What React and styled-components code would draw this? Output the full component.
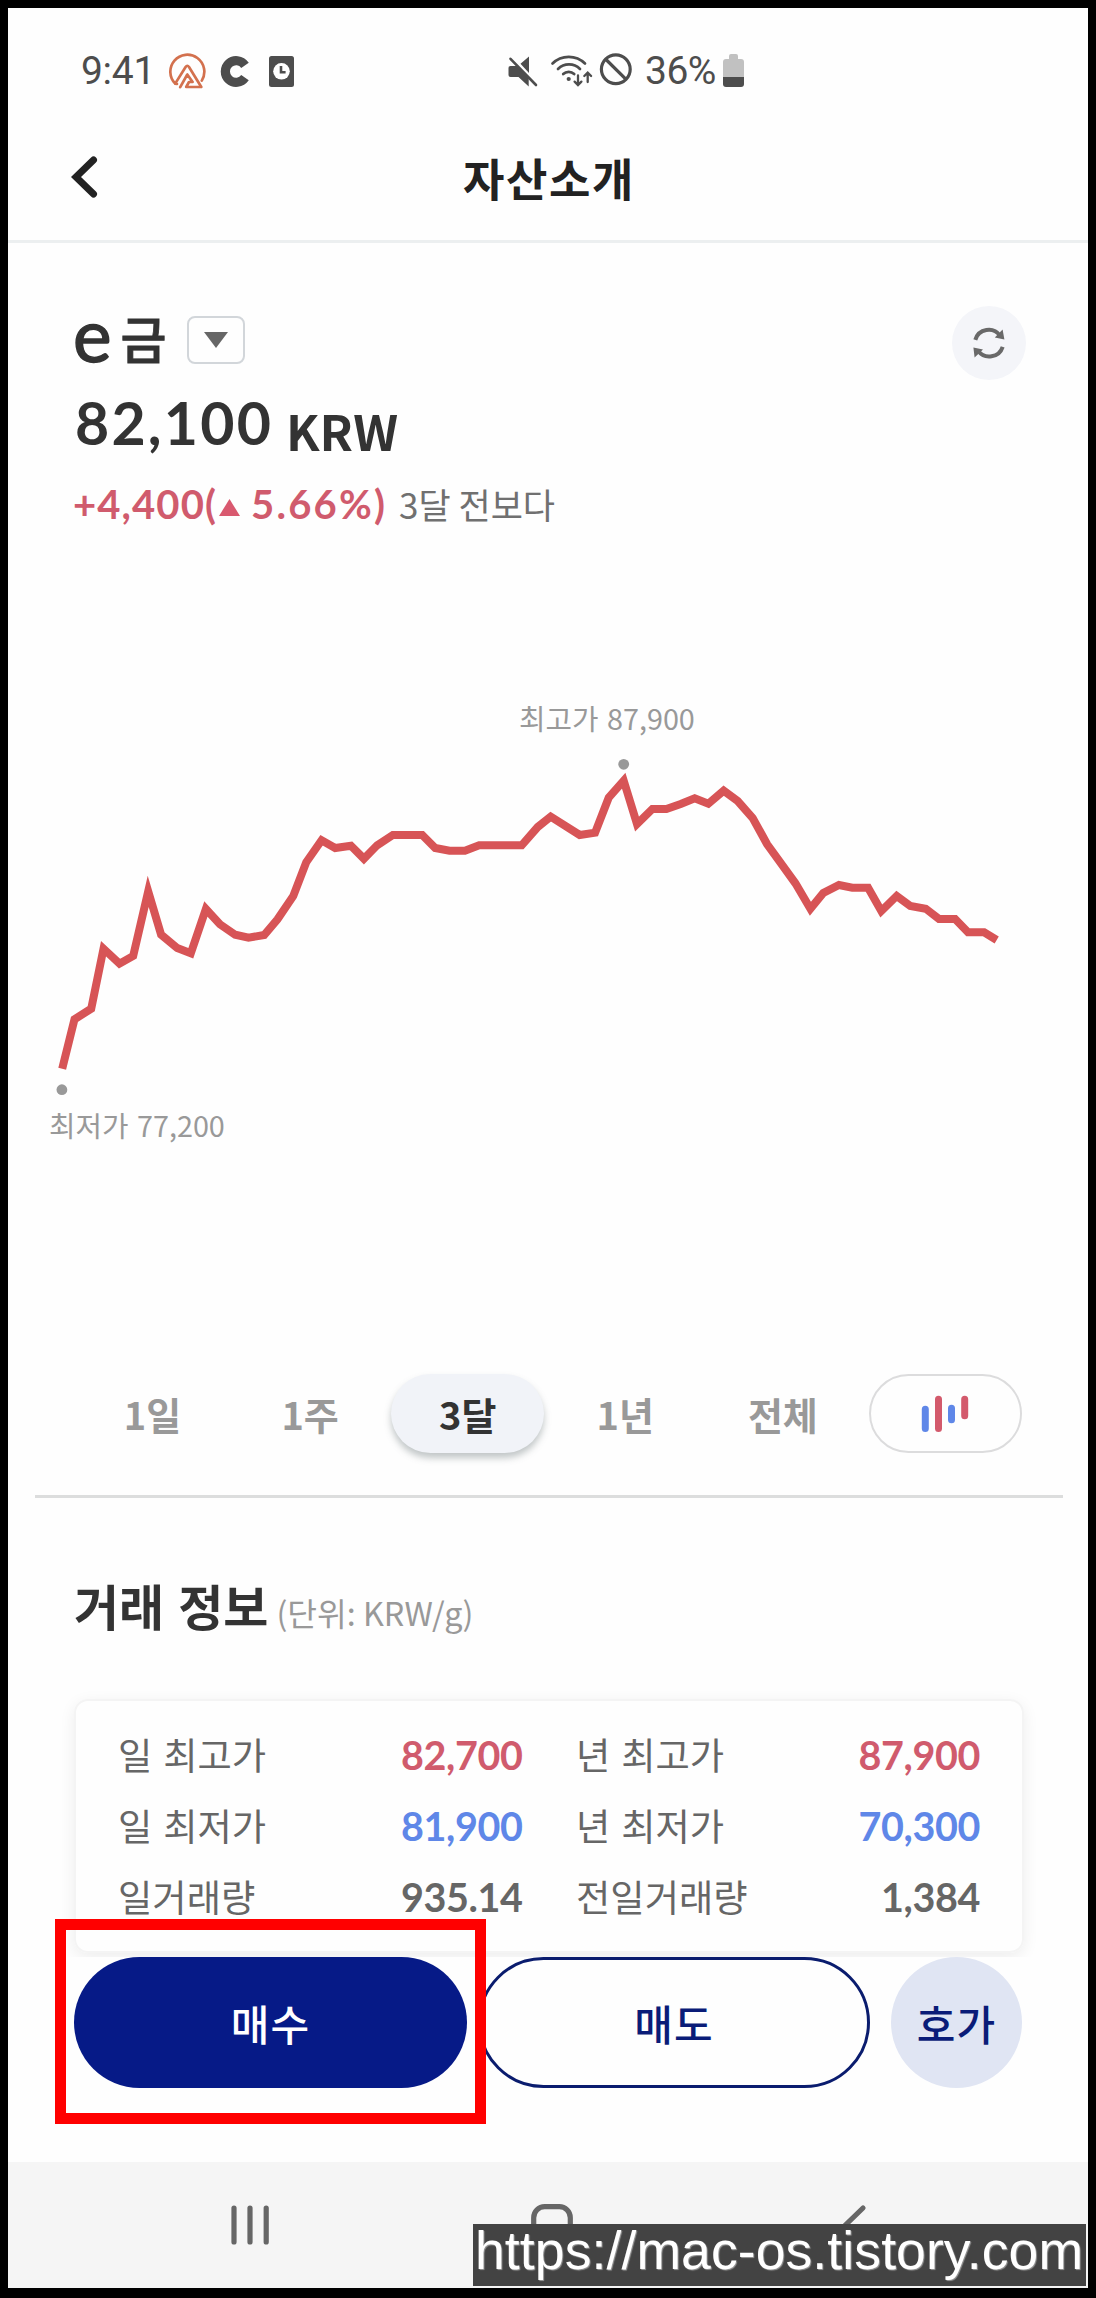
import React from "react";
import styled, { createGlobalStyle, css } from "styled-components";

const kr = `"Noto Sans CJK KR", "Noto Sans", sans-serif`;
const lato = `Lato, "Noto Sans CJK KR", sans-serif`;

const color = {
  ink: "#333333",
  gray: "#666666",
  mute: "#999999",
  up: "#d05b6d",
  down: "#5f87e8",
  navy: "#061a87",
  status: "#4d4d4d",
};

const Global = createGlobalStyle`
  * { box-sizing: border-box; }
  html, body { margin: 0; padding: 0; background: #000; }
  button { font: inherit; color: inherit; background: none; border: 0; padding: 0; margin: 0; }
  svg { display: block; flex: none; }
`;

const Frame = styled.div`
  width: 1096px;
  height: 2298px;
  padding: 8px 8px 10px;
  background: #000;
  font-family: ${kr};
  color: ${color.ink};
`;

const Screen = styled.div`
  position: relative;
  height: 100%;
  background: #fefefe;
  display: flex;
  flex-direction: column;
  white-space: nowrap;
`;

const StatusBar = styled.div`
  height: 105px;
  padding: 21px 0 0 73px;
  display: flex;
  align-items: center;
  font-family: Roboto, sans-serif;
  font-size: 39px;
  color: ${color.status};
`;

const Clock = styled.span`
  width: 87px;
  letter-spacing: -0.3px;
`;

const Notices = styled.div`
  width: 339px;
  display: flex;
  align-items: center;
`;

const Percent = styled.span`
  width: 91px;
  padding-left: 13px;
  letter-spacing: -0.5px;
`;

const Indicators = styled.div`
  display: flex;
  align-items: center;
`;

const Header = styled.header`
  height: 130px;
  border-bottom: 3px solid #eceff0;
  padding: 0 63px;
  display: grid;
  grid-template-columns: 60px 1fr 60px;
  align-items: center;
`;

const Title = styled.h1`
  margin: 0;
  padding: 2px 0 0 2px;
  text-align: center;
  font-size: 45px;
  line-height: 60px;
  font-weight: 700;
  letter-spacing: 1.6px;
  color: #222;
`;

const Content = styled.main`
  height: 1714px;
  overflow: hidden;
  display: flex;
  flex-direction: column;
`;

const Summary = styled.section`
  height: 285px;
  padding: 73px 62px 0 65px;
`;

const NameRow = styled.div`
  height: 48px;
  display: flex;
  align-items: flex-start;
`;

const AssetName = styled.div`
  margin-top: -6px;
  width: 114px;
  display: flex;
  align-items: flex-start;
  line-height: 48px;
`;

const LatinInitial = styled.span`
  font-family: ${lato};
  font-size: 73px;
  -webkit-text-stroke: 1.4px ${color.ink};
`;

const Hangul = styled.span`
  margin: 3px 0 0 9px;
  font-size: 50px;
  font-weight: 500;
  -webkit-text-stroke: 0.8px ${color.ink};
`;

const Picker = styled.button`
  width: 58px;
  height: 48px;
  border: 2.5px solid #d2d6da;
  border-radius: 8px;
  display: flex;
  align-items: center;
  justify-content: center;
`;

const Refresh = styled.button`
  margin: -10px 0 0 auto;
  width: 74px;
  height: 74px;
  border-radius: 50%;
  background: #f4f5f9;
  display: flex;
  align-items: center;
  justify-content: center;
`;

const PriceRow = styled.div`
  margin-top: 28px;
  height: 60px;
  line-height: 60px;
  display: flex;
  padding-left: 2px;
`;

const Price = styled.span`
  width: 211px;
  padding-top: 1px;
  font-family: ${lato};
  font-weight: 700;
  font-size: 59px;
  letter-spacing: 2.2px;
`;

const Currency = styled.span`
  margin-top: 8px;
  font-size: 49px;
  font-weight: 700;
`;

const ChangeRow = styled.div`
  margin-top: 26px;
  height: 50px;
  line-height: 50px;
  display: flex;
  align-items: flex-start;
`;

const Change = styled.span`
  width: 326px;
  padding-top: 1px;
  display: flex;
  align-items: center;
  font-family: ${lato};
  font-weight: 700;
  font-size: 40px;
  letter-spacing: 1.1px;
  color: ${color.up};
`;

const Rate = styled.span`
  letter-spacing: 2.2px;
`;

const UpMark = styled.svg`
  margin: 7px 11px 0 2px;
`;

const Since = styled.span`
  padding-top: 1px;
  font-size: 35px;
  color: #707070;
`;

const ChartSvg = styled.svg`
  width: 1080px;
  height: 846px;
`;

const ChartLabel = styled.text`
  font-family: ${kr};
  font-size: 28.8px;
  word-spacing: 2px;
  fill: ${color.mute};
`;

const Ranges = styled.nav`
  height: 79px;
  padding-left: 68px;
  display: flex;
  gap: 4.6px;
`;

const pill = css`
  width: 153px;
  height: 79px;
  border-radius: 40px;
  display: flex;
  align-items: center;
  justify-content: center;
`;

const Range = styled.button`
  ${pill}
  font-size: 38px;
  line-height: 60px;
  font-weight: 700;
  color: ${(p) => (p.$active ? color.ink : color.mute)};
  background: ${(p) => (p.$active ? "#f1f3f8" : "transparent")};
  box-shadow: ${(p) => (p.$active ? "0 5px 7px rgba(110, 122, 125, 0.42)" : "none")};
`;

const CandleToggle = styled.button`
  ${pill}
  margin-left: 5px;
  border: 2px solid #dcdcdd;
`;

const Divider = styled.hr`
  flex: none;
  margin: 42px 25px 0 27px;
  height: 3px;
  border: 0;
  background: #dcdddd;
`;

const SectionTitle = styled.h2`
  margin: 77px 0 0 66px;
  height: 60px;
  font-size: 49px;
  line-height: 60px;
  font-weight: 700;
  word-spacing: 3px;
`;

const Unit = styled.small`
  margin-left: 8px;
  font-size: 32.3px;
  font-weight: 400;
  word-spacing: 0;
  color: ${color.mute};
`;

const Card = styled.section`
  flex: none;
  margin: 64px 64px 0 66px;
  height: 254px;
  padding: 17px 40px 0 42px;
  border: 2px solid #f4f4f4;
  border-radius: 14px;
  box-shadow: 0 4px 16px rgba(0, 0, 0, 0.07);
  display: grid;
  grid-template-columns: 404.5px 404px;
  grid-auto-rows: 71px;
  column-gap: 53.5px;
`;

const Stat = styled.div`
  display: flex;
  justify-content: space-between;
  line-height: 71px;
`;

const StatLabel = styled.span`
  padding-top: 1px;
  font-size: 37.3px;
  word-spacing: 2.5px;
  color: ${color.gray};
`;

const StatValue = styled.span`
  padding-top: 1px;
  font-family: ${lato};
  font-size: 39.5px;
  font-weight: 700;
  letter-spacing: -0.4px;
  color: ${(p) => color[p.$tone]};
`;

const Actions = styled.div`
  position: relative;
  height: 205px;
  padding-left: 66px;
  display: flex;
  align-items: flex-start;
`;

const Action = styled.button`
  height: 131px;
  border-radius: 66px;
  font-size: 42px;
  line-height: 60px;
  font-weight: 500;
  letter-spacing: 1px;
  color: #0a1c78;
`;

const Buy = styled(Action)`
  width: 393px;
  background: ${color.navy};
  color: #fff;
`;

const Sell = styled(Action)`
  margin-left: 11px;
  width: 392px;
  border: 3px solid #0a1c6e;
`;

const Quote = styled(Action)`
  margin-left: 21px;
  width: 131px;
  background: #e0e5f3;
`;

const Highlight = styled.div`
  position: absolute;
  left: 47px;
  top: -38px;
  width: 431px;
  height: 205px;
  border: 11px solid #ff0000;
`;

const SystemNav = styled.footer`
  height: 126px;
  background: #f5f5f5;
`;

const Watermark = styled.div`
  position: absolute;
  right: 2px;
  bottom: 2px;
  width: 613px;
  height: 62px;
  padding-left: 2px;
  background: #434343;
  color: #fff;
  font-family: "Liberation Sans", Arial, sans-serif;
  font-size: 53.5px;
  line-height: 54px;
  letter-spacing: 0.1px;
  text-shadow: 1px 1px 1px #999;
`;

const prices = [
  [62.2, 1068.7], [74.5, 1019.3], [91.2, 1008.7], [103.5, 948.7], [119.5, 963.7],
  [133.2, 956], [148.2, 891.3], [161.1, 934.7], [177.2, 948], [190.8, 953.3],
  [205.9, 909], [219.9, 924.3], [235.2, 934.7], [248.5, 937.7], [264.2, 935],
  [277.5, 919.3], [293.3, 896], [306.2, 862.3], [321.6, 840.3], [335.2, 848],
  [350.9, 845.7], [363.9, 858.7], [377.1, 845.3], [392.9, 835], [422.2, 835],
  [435.2, 848], [449.5, 850.7], [464.9, 850.7], [479.2, 845.3], [521.7, 845.3],
  [537.7, 827], [550.7, 816.7], [579.7, 835], [595.1, 832.7], [608.7, 797.7],
  [623.7, 780.7], [637, 824], [652.4, 809], [666.4, 809], [680.7, 804],
  [694.7, 798.3], [708.3, 803.7], [723.7, 790.7], [737.7, 801], [752.7, 818],
  [767, 844], [781, 863.3], [795.4, 883.3], [810.4, 908.7], [823.3, 893],
  [839, 885], [852.3, 887.7], [868.1, 887.7], [881.3, 911], [896.7, 896],
  [910.3, 906], [925.7, 908.7], [939, 919], [955.1, 919], [968, 932.3],
  [984.1, 932.3], [996.7, 940],
];

const ranges = ["1일", "1주", "3달", "1년", "전체"];

const stats = [
  ["일 최고가", "82,700", "up"],
  ["년 최고가", "87,900", "up"],
  ["일 최저가", "81,900", "down"],
  ["년 최저가", "70,300", "down"],
  ["일거래량", "935.14", "gray"],
  ["전일거래량", "1,384", "gray"],
];

function NoticeIcons() {
  return (
    <svg width="128" height="36" viewBox="168 53 128 36">
      <g fill="none" stroke="#d3714e" strokeWidth="2.7" strokeLinecap="round" strokeLinejoin="round">
        <path d="M201.8 80.6A17 17 0 1 0 175.2 83.6L185.6 67Q187.3 64.5 189 67L201.3 87H186.2L189 82H192.6L187.3 74.5L180.2 87.2" />
        <path d="M175.2 83.6L177 84" />
      </g>
      <path d="M245 65.3A10.8 10.8 0 1 0 245 77.7" fill="none" stroke={color.status} strokeWidth="9.2" />
      <rect x="269" y="56" width="25" height="31" rx="2.5" fill={color.status} />
      <circle cx="281.5" cy="71.3" r="8.3" fill="#fff" />
      <path d="M281 66v6.2h4.6" fill="none" stroke={color.status} strokeWidth="2.6" />
    </svg>
  );
}

function SignalIcons() {
  return (
    <svg width="125" height="36" viewBox="507 53 125 36" fill="none" stroke={color.status}>
      <path d="M508.5 68q0-2 2-2h6.5L528.7 78V86.5L518.5 77h-8q-2 0-2-2zM520.5 63.8L529 56.5V73z" fill={color.status} stroke="none" />
      <path d="M510.5 58.8L536 85" strokeWidth="2.6" strokeLinecap="round" />
      <g strokeWidth="2.7" strokeLinecap="round">
        <path d="M552.5 63.5a23 23 0 0 1 32.5 0" />
        <path d="M558 69a15.5 15.5 0 0 1 22 0" />
        <path d="M563.2 74a8 8 0 0 1 11 0" />
        <path d="M578 75.5v9.2M574.6 81.6l3.4 3.4 3.4-3.4M587.7 82v-9M584.3 76l3.4-3.4 3.4 3.4" strokeWidth="2.3" />
      </g>
      <circle cx="568.7" cy="79" r="2.1" fill={color.status} stroke="none" />
      <circle cx="615.8" cy="69.3" r="14.4" strokeWidth="3.2" />
      <path d="M606 59.5L625.8 79.2" strokeWidth="3.2" />
    </svg>
  );
}

function BatteryIcon() {
  return (
    <svg width="22" height="34" viewBox="0 0 22 34">
      <path d="M6 2q0-2 2-2h5q2 0 2 2v3h3q3 0 3 3v15H0V8q0-3 3-3h3z" fill="#c1c1c1" />
      <path d="M0 23h21v7q0 3-3 3H3q-3 0-3-3z" fill={color.status} />
    </svg>
  );
}

function PriceChart() {
  return (
    <ChartSvg viewBox="8 528 1080 846">
      <polyline
        points={prices.map((p) => p.join(",")).join(" ")}
        fill="none"
        stroke="#d75456"
        strokeWidth="8"
        strokeMiterlimit="10"
      />
      <circle cx="61.9" cy="1089.7" r="5.4" fill={color.mute} />
      <circle cx="623.7" cy="764.3" r="5.4" fill={color.mute} />
      <ChartLabel x="49" y="1137">최저가 77,200</ChartLabel>
      <ChartLabel x="519" y="730">최고가 87,900</ChartLabel>
    </ChartSvg>
  );
}

export default function App() {
  return (
    <>
      <Global />
      <Frame>
        <Screen>
          <StatusBar>
            <Clock>9:41</Clock>
            <Notices>
              <NoticeIcons />
            </Notices>
            <Indicators>
              <SignalIcons />
              <Percent>36%</Percent>
              <BatteryIcon />
            </Indicators>
          </StatusBar>

          <Header>
            <svg width="28" height="42" viewBox="0 0 28 42">
              <path d="M22.5 4L5 21L22.5 38" fill="none" stroke="#222" strokeWidth="7" strokeLinecap="round" />
            </svg>
            <Title>자산소개</Title>
          </Header>

          <Content>
            <Summary>
              <NameRow>
                <AssetName>
                  <LatinInitial>e</LatinInitial>
                  <Hangul>금</Hangul>
                </AssetName>
                <Picker>
                  <svg width="24" height="16" viewBox="0 0 24 16">
                    <path d="M0 0h24L12 16z" fill="#666" />
                  </svg>
                </Picker>
                <Refresh>
                  <svg width="32" height="32" viewBox="0 0 32 32">
                    <g fill="none" stroke="#696969" strokeWidth="4">
                      <path d="M2.3 12.8A14 14 0 0 1 27 8.6" />
                      <path d="M29.7 19.8A14 14 0 0 1 5 23.6" />
                    </g>
                    <path d="M29.6 2.4L31.4 12.4L21.8 10.4z M1.6 30.4L0.4 20.4L10 22.4z" fill="#696969" />
                  </svg>
                </Refresh>
              </NameRow>
              <PriceRow>
                <Price>82,100</Price>
                <Currency>KRW</Currency>
              </PriceRow>
              <ChangeRow>
                <Change>
                  +4,400(
                  <UpMark width="21" height="17" viewBox="0 0 21 17">
                    <path d="M10.5 0L21 17H0z" fill="#d9596f" />
                  </UpMark>
                  <Rate>5.66%)</Rate>
                </Change>
                <Since>3달 전보다</Since>
              </ChangeRow>
            </Summary>

            <PriceChart />

            <Ranges>
              {ranges.map((label) => (
                <Range key={label} $active={label === "3달"}>
                  {label}
                </Range>
              ))}
              <CandleToggle>
                <svg width="48" height="38" viewBox="921.5 1395 48 38" strokeWidth="7" strokeLinecap="round">
                  <path d="M925.8 1409.3V1428.5M952 1408.3V1419.7" stroke={color.down} />
                  <path d="M939 1399.3V1428.5M965.2 1399.3V1415.8" stroke="#d35a6c" />
                </svg>
              </CandleToggle>
            </Ranges>

            <Divider />

            <SectionTitle>
              거래 정보<Unit>(단위: KRW/g)</Unit>
            </SectionTitle>

            <Card>
              {stats.map(([label, value, tone]) => (
                <Stat key={label}>
                  <StatLabel>{label}</StatLabel>
                  <StatValue $tone={tone}>{value}</StatValue>
                </Stat>
              ))}
            </Card>
          </Content>

          <Actions>
            <Buy>매수</Buy>
            <Sell>매도</Sell>
            <Quote>호가</Quote>
            <Highlight />
          </Actions>

          <SystemNav>
            <svg width="1080" height="126" viewBox="8 2162 1080 126" fill="none" stroke="#666" strokeWidth="5.2" strokeLinecap="round">
              <path d="M234 2208V2242M250 2208V2242M266.2 2208V2242" />
              <rect x="533.7" y="2206.7" width="36.6" height="36.6" rx="11" />
              <path d="M863 2208L845 2225.5L863 2243" />
            </svg>
          </SystemNav>

          <Watermark>https://mac-os.tistory.com</Watermark>
        </Screen>
      </Frame>
    </>
  );
}
